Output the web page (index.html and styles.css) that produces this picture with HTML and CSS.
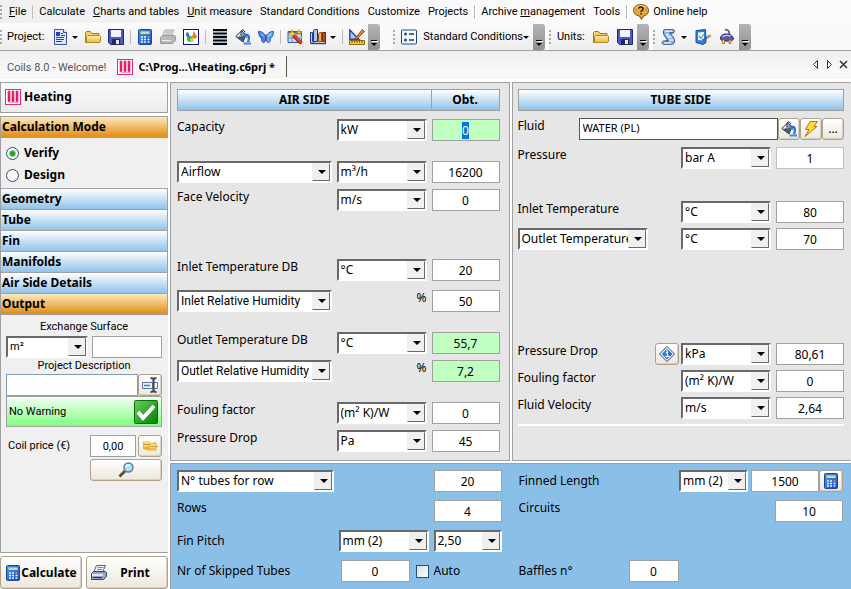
FILE: index.html
```html
<!DOCTYPE html>
<html lang="en">
<head>
  <meta charset="UTF-8" />
  <meta name="viewport" content="width=device-width, initial-scale=1.0"/>
  <title>Coils 8.0 - Heating.c6prj</title>
  <link rel="stylesheet" href="styles.css">
</head>
<body>
  <!-- icon set -->
  <svg class="sprite" aria-hidden="true">
    <defs>
      <linearGradient id="g-blue" x1="0" y1="0" x2="1" y2="1"><stop offset="0" stop-color="#5aa0f0"/><stop offset="1" stop-color="#0c48b8"/></linearGradient>
      <linearGradient id="g-gold" x1="0" y1="0" x2="0" y2="1"><stop offset="0" stop-color="#fff0a8"/><stop offset="1" stop-color="#e8b840"/></linearGradient>
      <linearGradient id="g-pink" x1="0" y1="0" x2="0" y2="1"><stop offset="0" stop-color="#ff2090"/><stop offset="1" stop-color="#d01848"/></linearGradient>
      <linearGradient id="g-green" x1="0" y1="0" x2="1" y2="1"><stop offset="0" stop-color="#6cd060"/><stop offset="1" stop-color="#008000"/></linearGradient>
      <linearGradient id="g-steel" x1="0" y1="0" x2="1" y2="1"><stop offset="0" stop-color="#e0e8f0"/><stop offset="1" stop-color="#384c6c"/></linearGradient>
    </defs>
    <symbol id="i-doc" viewBox="0 0 16 16">
      <path d="M2.500.5h9l3 3v12h-12z" fill="#dce8ff" stroke="#4050b0"/>
      <path d="M11.500.5v3h3" fill="#fff" stroke="#4050b0"/>
      <path d="M4 3h4v4H4z" fill="#2840c0"/>
      <path d="M9 4.500h2M9 6.500h4M4 8.500h8M4 10.500h8M4 12.500h6" stroke="#2840c0"/>
    </symbol>
    <symbol id="i-folder" viewBox="0 0 16 16">
      <path d="M.5 13.500v-10l1-1h4l1.500 2h7v9z" fill="#f4d070" stroke="#a87818"/>
      <path d="M1.500 13.500v-6l1-1h12l1 1v5l-1 1z" fill="url(#g-gold)" stroke="#b08820"/>
    </symbol>
    <symbol id="i-save" viewBox="0 0 16 16">
      <path d="M.5.5h15v15h-13l-2-2z" fill="#5058c0" stroke="#202870"/>
      <path d="M3 1h10v7H3z" fill="#f0f4ff"/>
      <path d="M4 10h8v6H4z" fill="#222a60"/>
      <path d="M8 11h3v4H8z" fill="#e8ecf8"/>
    </symbol>
    <symbol id="i-calc" viewBox="0 0 16 16">
      <rect x="1.500" y=".5" width="13" height="15" rx="1" fill="url(#g-blue)" stroke="#1848a0"/>
      <path d="M3 2h10v3.500H3z" fill="#b8e0c8" stroke="#2860a0" stroke-width=".6"/>
      <path d="M4 8h2M7 8h2M4 10.500h2M7 10.500h2M4 13h2M7 13h2M10.500 10.500h2M10.500 13h2" stroke="#e8f4ff" stroke-width="1.400"/>
      <path d="M10.500 8h2" stroke="#ff8030" stroke-width="1.600"/>
    </symbol>
    <symbol id="i-printer-off" viewBox="0 0 16 16">
      <path d="M5 1h9l-3 7H2z" fill="#e4e4e4" stroke="#aaa"/>
      <path d="M6 3h6M5 5h6" stroke="#aaa"/>
      <path d="M.5 8.500l2-2h12l1 1v4l-3 3H.5z" fill="#b8b8b8" stroke="#999"/>
      <path d="M2 11.500h9" stroke="#eee"/>
    </symbol>
    <symbol id="i-printer" viewBox="0 0 16 16">
      <path d="M5.500.5h9l-3 7h-9z" fill="#f4f6ff" stroke="#586078"/>
      <path d="M6.500 2.500h6M6 4.500h5" stroke="#8088a0"/>
      <path d="M.5 8.500l2-2h12l1 1v4l-3 3H.5z" fill="#98a4c8" stroke="#384060"/>
      <path d="M1 9h11v2H1z" fill="#e0e6f8"/>
      <path d="M2 12.500h9" stroke="#283050"/>
    </symbol>
    <symbol id="i-chart" viewBox="0 0 16 16">
      <rect x=".5" y=".5" width="15" height="15" fill="#fff" stroke="#101080"/>
      <path d="M3 4c0 5 2 6 5 6L5 3z" fill="#2878d0"/>
      <path d="M11 2l3 6-2 2-3-2z" fill="#f07818"/>
      <circle cx="7" cy="10" r="3" fill="#40b060"/>
      <circle cx="9" cy="11" r="2" fill="#c8d840"/>
    </symbol>
    <symbol id="i-lines" viewBox="0 0 16 16">
      <path d="M1 1h14M1 4.500h14M1 8h14M1 11.500h14M1 15h14" stroke="#000810" stroke-width="2"/>
      <path d="M1 2.500h14M1 6.500h14M1 9.500h14M1 13.500h14" stroke="#8898a8" stroke-width=".6"/>
    </symbol>
    <symbol id="i-bucket" viewBox="0 0 16 16">
      <path d="M.8 7.500L6.500 2l4.500 3.500-3 7.500z" fill="url(#g-steel)" stroke="#283858"/>
      <path d="M1.500 8l6.500 4.500L10 7z" fill="#485878"/>
      <path d="M2.500 7.500L7 3.500" stroke="#fff" stroke-width="1.400"/>
      <path d="M6 6V2l2-1.500L10 3" fill="none" stroke="#182848"/>
      <path d="M9.500 5.500C13 3.500 15 6 15 8.500L14.500 13H12V9l-2-1z" fill="#2070e8"/>
      <path d="M12 7l1 5" stroke="#90c8ff"/>
      <path d="M8.500 14.500H16" stroke="#3888f0" stroke-width="2"/>
    </symbol>
    <symbol id="i-butterfly" viewBox="0 0 16 16">
      <path d="M8 7C6 4 3 2 .5 2.500 1 7 2 9 4 9c-1 2 0 5 2 4.500 1-.5 2-2.500 2-4.500z" fill="#3888f0" stroke="#4040a0"/>
      <path d="M8 7c2-3 5-5 7.500-4.500C15 7 14 9 12 9c1 2 0 5-2 4.500-1-.5-2-2.500-2-4.500z" fill="#58b0ff" stroke="#4040a0"/>
      <path d="M3 4.500l3 3M13 4.500l-3 3" stroke="#b0e0ff"/>
      <path d="M8 6v6" stroke="#604890" stroke-width="1.500"/>
    </symbol>
    <symbol id="i-wand" viewBox="0 0 16 16">
      <path d="M1 2.500h13.500v11H1z" fill="#c0d8f8" stroke="#3060b0"/>
      <path d="M1 3h13v2H1z" fill="#3870c8"/>
      <path d="M1 9h13M5 5v8M10 5v8" stroke="#7098d8"/>
      <path d="M6 6l8.500 8.500" stroke="#a02010" stroke-width="3.600"/>
      <path d="M6.500 6l8 8" stroke="#f05838" stroke-width="1.300"/>
      <path d="M5 .5l1 3L9.500 5 6 6 5 9 4 6 .5 5 4 3.500zM12 .5l.7 2 2 .7-2 .7-.7 2-.7-2-2-.7 2-.7z" fill="#ffd030" stroke="#d08010" stroke-width=".6"/>
      <circle cx="14" cy="8.500" r="1" fill="#f0a020"/>
    </symbol>
    <symbol id="i-books" viewBox="0 0 16 16">
      <path d="M.5 3.500h2v9l2 2h-4z" fill="#b8d0f0" stroke="#204080"/>
      <path d="M3.500 1.500l1-1h3v12h-4z" fill="#a8c8f8" stroke="#203878"/>
      <path d="M8.500 4.500l1-1h2v9h-3z" fill="#f8b040" stroke="#905010"/>
      <path d="M12.500 3.500h3v9h-3z" fill="#c04828" stroke="#702010"/>
      <path d="M1 14.500h14.500v-2" fill="none" stroke="#304878" stroke-width="1.500"/>
    </symbol>
    <symbol id="i-ruler" viewBox="0 0 16 16">
      <path d="M.8 1v9.300h9z" fill="#a8c8f8" stroke="#2050c0" stroke-width="1.500"/>
      <path d="M6 9.500L13.500.5l2 2L8 10l-2.500.8z" fill="#f08020" stroke="#802808" stroke-width=".8"/>
      <path d="M.5 11.500h15v4H.5z" fill="#f8d048" stroke="#906810"/>
      <path d="M3 12v2M5.500 12v1.500M8 12v2M10.500 12v1.500M13 12v2" stroke="#604008"/>
    </symbol>
    <symbol id="i-list" viewBox="0 0 16 16">
      <rect x=".5" y="1" width="15" height="14" rx="1" fill="#f4faff" stroke="#284878"/>
      <circle cx="4.500" cy="5" r="1.600" fill="#1058b0"/>
      <circle cx="4.500" cy="11" r="1.600" fill="#1058b0"/>
      <path d="M8 5h5M8 11h5" stroke="#203858" stroke-width="1.500"/>
    </symbol>
    <symbol id="i-scroll" viewBox="0 0 16 16">
      <path d="M3.500.7H12c2 0 2 3 0 3.300H9.500c0 2 4 4 4 7.500 0 2-1 3.800-3 3.800H3c-2.500 0-2.500-3 0-3.300h3.500C6.500 9 3 8 2.500 4 2.300 2 2.300.7 3.500.7z" fill="#8cb4e4" stroke="#285080"/>
      <path d="M4 2.200h7.500M5 5.500l3 .5M6.500 8h4M8.500 11h4M3 13.800h7" stroke="#e8f4ff" stroke-width="1.300"/>
      <path d="M8 4h4M4 12h4" stroke="#305888"/>
    </symbol>
    <symbol id="i-check" viewBox="0 0 16 16">
      <path d="M1 1.500l9.500-1 .5 13-3 2-7-2z" fill="#3080e0" stroke="#1850a0"/>
      <path d="M3 3.500l6-.5v8.500l-6-.5z" fill="#f0f8ff"/>
      <path d="M4 7l2 2.500L9 5" fill="none" stroke="#50a0e0" stroke-width="1.300"/>
      <path d="M7.500 11.500l7.500-5" stroke="#385890" stroke-width="2"/>
      <path d="M12 8.500l4-2" stroke="#c09060" stroke-width="2"/>
    </symbol>
    <symbol id="i-plug" viewBox="0 0 16 16">
      <path d="M6 1c3-1 5 2 4 5" fill="none" stroke="#505860" stroke-width="1.600"/>
      <path d="M1.500 10c0-4 3-5 6-5s6 1 7 5l-2 2H3.500z" fill="#5858b0" stroke="#202060"/>
      <path d="M3.500 8c2-2 6-2 8-1" stroke="#c8c8f0" fill="none" stroke-width="1.400"/>
      <path d="M4.500 11v4M11 11v4" stroke="#c07810" stroke-width="2.600"/>
      <path d="M4.500 11v3M11 11v3" stroke="#ffd060"/>
    </symbol>
    <symbol id="i-help" viewBox="0 0 16 16">
      <path d="M8 .5c5 0 7.500 3 7.500 6 0 3-2 5-5 5.500L8.500 15.500 6.500 12C3 11.500.5 9.500.5 6.500c0-3 2.500-6 7.500-6z" fill="#e0a838" stroke="#785010"/>
      <path d="M3 4c2-3 8-3 10-.5" stroke="#ffe8a0" fill="none"/>
      <path d="M5.500 4.500C6 2.500 10 2.500 10 5c0 1.500-2 1.500-2 3M8 9v1.500" fill="none" stroke="#302008" stroke-width="1.500"/>
    </symbol>
    <symbol id="i-coil" viewBox="0 0 16 16">
      <rect x=".5" y=".5" width="15" height="15" fill="#fff" stroke="#e82880"/>
      <path d="M3 2h2v10.500H3zM7 2h2v10.500H7zM11 2h2v10.500h-2z" fill="url(#g-pink)" stroke="#e82068" stroke-width=".6"/>
      <path d="M4 13.500h9.500" stroke="#f8a0b8"/>
    </symbol>
    <symbol id="i-rename" viewBox="0 0 16 16">
      <path d="M.5 5.500h10v6H.5z" fill="#e8f2ff" stroke="#5878a8"/>
      <path d="M2 8.500h6" stroke="#3080e0" stroke-width="1.500"/>
      <path d="M12 5.500h3.500v6H12" fill="none" stroke="#5878a8"/>
      <path d="M8.500 1c2 0 3 1 3 2v10c0 1-1 2-3 2M14.500 1c-2 0-3 1-3 2v10c0 1 1 2 3 2" fill="none" stroke="#404858" stroke-width="2"/>
    </symbol>
    <symbol id="i-ok" viewBox="0 0 24 24">
      <rect x=".5" y=".5" width="23" height="23" rx="1" fill="url(#g-green)" stroke="#087008"/>
      <path d="M4 12l5 6L20 6" fill="none" stroke="#fff" stroke-width="4"/>
    </symbol>
    <symbol id="i-coins" viewBox="0 0 16 16">
      <path d="M1 3.500h6l2 2 5-2 1.500 5-1.500 4.500H7L1 11z" fill="#ecc050"/>
      <path d="M2 5h5M2 8h4M9 7h5M8 10h6M8 12h5" stroke="#fff0b0"/>
      <path d="M1 6.500h6M1 10h6M9 8.500h6M7.500 11h6" stroke="#d89828"/>
    </symbol>
    <symbol id="i-search" viewBox="0 0 16 16">
      <path d="M1.500 14.500L7 9" stroke="#6a4a40" stroke-width="3"/>
      <circle cx="10.500" cy="5.500" r="4.500" fill="#a8e0ff" stroke="#607898" stroke-width="1.400"/>
      <path d="M8 5c.5-2 2-2.500 3.500-2" stroke="#fff" fill="none" stroke-width="1.400"/>
    </symbol>
    <symbol id="i-bolt" viewBox="0 0 16 16">
      <path d="M7 .5h7.500l-3.500 5h3L2 15.500l4-7H2.500z" fill="#ffd848" stroke="#a87810"/>
    </symbol>
    <symbol id="i-info" viewBox="0 0 16 16">
      <path d="M8 .5L15.500 8 8 15.500.5 8z" fill="#fff" stroke="#184088"/>
      <path d="M8 2.500L13.500 8 8 13.500 2.500 8z" fill="url(#g-blue)"/>
      <path d="M7 6.500h1.500v4M6.500 10.500h4" stroke="#fff" stroke-width="1.300" fill="none"/>
      <circle cx="8" cy="4.700" r=".8" fill="#fff"/>
    </symbol>
  </svg>

  <nav class="menubar">
    <span class="grip"></span>
    <button type="button"><u>F</u>ile</button>
    <span class="sep"></span>
    <button type="button">Calculate</button>
    <button type="button"><u>C</u>harts and tables</button>
    <button type="button"><u>U</u>nit measure</button>
    <button type="button">Standard Conditions</button>
    <button type="button">Customize</button>
    <button type="button">Projects</button>
    <span class="sep"></span>
    <button type="button">Archive <u>m</u>anagement</button>
    <button type="button">Tools</button>
    <span class="sep"></span>
    <button type="button" class="with-icon"><svg><use href="#i-help"/></svg>Online help</button>
  </nav>

  <div class="toolbars">
    <div class="toolbar main-tools">
      <span class="grip"></span>
      <span class="caption">Project:</span>
      <button type="button" class="drop" aria-label="New"><svg><use href="#i-doc"/></svg></button>
      <button type="button" aria-label="Open"><svg><use href="#i-folder"/></svg></button>
      <button type="button" aria-label="Save"><svg><use href="#i-save"/></svg></button>
      <span class="sep"></span>
      <button type="button" aria-label="Calculate"><svg><use href="#i-calc"/></svg></button>
      <button type="button" aria-label="Print" disabled><svg><use href="#i-printer-off"/></svg></button>
      <button type="button" aria-label="Charts"><svg><use href="#i-chart"/></svg></button>
      <span class="sep"></span>
      <button type="button" aria-label="Geometry"><svg><use href="#i-lines"/></svg></button>
      <button type="button" aria-label="Fluids"><svg><use href="#i-bucket"/></svg></button>
      <button type="button" aria-label="Air"><svg><use href="#i-butterfly"/></svg></button>
      <span class="sep"></span>
      <button type="button" aria-label="Wizard"><svg><use href="#i-wand"/></svg></button>
      <button type="button" class="drop" aria-label="Archives"><svg><use href="#i-books"/></svg></button>
      <span class="sep"></span>
      <button type="button" aria-label="Drawing"><svg><use href="#i-ruler"/></svg></button>
      <button type="button" class="more" aria-label="More"></button>
    </div>
    <div class="toolbar">
      <span class="grip"></span>
      <button type="button" class="drop text"><svg><use href="#i-list"/></svg>Standard Conditions</button>
      <button type="button" class="more" aria-label="More"></button>
    </div>
    <div class="toolbar">
      <span class="grip"></span>
      <span class="caption">Units:</span>
      <button type="button" aria-label="Open units"><svg><use href="#i-folder"/></svg></button>
      <button type="button" aria-label="Save units"><svg><use href="#i-save"/></svg></button>
      <button type="button" class="more" aria-label="More"></button>
    </div>
    <div class="toolbar">
      <span class="grip"></span>
      <button type="button" class="drop" aria-label="Scripts"><svg><use href="#i-scroll"/></svg></button>
      <button type="button" aria-label="Check"><svg><use href="#i-check"/></svg></button>
      <button type="button" aria-label="Connect"><svg><use href="#i-plug"/></svg></button>
      <button type="button" class="more" aria-label="More"></button>
    </div>
  </div>

  <div class="tabs">
    <button type="button" class="tab">Coils 8.0 - Welcome!</button>
    <button type="button" class="tab active"><svg><use href="#i-coil"/></svg>C:\Prog...\Heating.c6prj *</button>
    <div class="tab-nav">
      <button type="button" aria-label="Previous"><svg viewBox="0 0 9 9"><path d="M6.500.5v8l-4-4z"/></svg></button>
      <button type="button" aria-label="Next"><svg viewBox="0 0 9 9"><path d="M2.500.5v8l4-4z"/></svg></button>
      <button type="button" aria-label="Close"><svg viewBox="0 0 9 9"><path d="M1 1l7 7M8 1L1 8" stroke-width="1.500"/></svg></button>
    </div>
  </div>

  <main class="workspace">
    <aside class="sidebar">
      <div class="coil-type"><svg><use href="#i-coil"/></svg>Heating</div>
      <div class="accordion">
        <button type="button" class="section open">Calculation Mode</button>
        <div class="modes">
          <label><input type="radio" name="mode" checked />Verify</label>
          <label><input type="radio" name="mode" />Design</label>
        </div>
        <button type="button" class="section">Geometry</button>
        <button type="button" class="section">Tube</button>
        <button type="button" class="section">Fin</button>
        <button type="button" class="section">Manifolds</button>
        <button type="button" class="section">Air Side Details</button>
        <button type="button" class="section open">Output</button>
        <div class="output">
          <label for="surface">Exchange Surface</label>
          <div class="surface">
            <span class="combo"><select aria-label="Surface unit"><option>m²</option></select></span>
            <input type="text" id="surface" class="field" />
          </div>
          <label for="description">Project Description</label>
          <div class="description">
            <input type="text" id="description" class="field" />
            <button type="button" class="btn" aria-label="Edit description"><svg><use href="#i-rename"/></svg></button>
          </div>
          <div class="warning">No Warning<svg><use href="#i-ok"/></svg></div>
          <div class="price">
            <label for="price">Coil price (€)</label>
            <input type="text" id="price" class="field" value="0,00" />
            <button type="button" class="btn" aria-label="Price list"><svg><use href="#i-coins"/></svg></button>
            <button type="button" class="btn find" aria-label="Find"><svg><use href="#i-search"/></svg></button>
          </div>
        </div>
      </div>
      <div class="actions">
        <button type="button" class="btn"><svg><use href="#i-calc"/></svg><span>Calculate</span></button>
        <button type="button" class="btn"><svg><use href="#i-printer"/></svg><span>Print</span></button>
      </div>
    </aside>

    <section class="panel air">
      <div class="heads"><h2>AIR SIDE</h2><h2>Obt.</h2></div>
      <div class="group">
        <div class="row">
          <label for="capacity">Capacity</label>
          <span class="combo"><select aria-label="Capacity unit"><option>kW</option></select></span>
          <input type="text" id="capacity" class="field result" value="0" autofocus />
        </div>
      </div>
      <div class="group">
        <div class="row">
          <span class="combo"><select aria-label="Flow type"><option>Airflow</option></select></span>
          <span class="combo"><select aria-label="Airflow unit"><option>m³/h</option></select></span>
          <input type="text" aria-label="Airflow" class="field" value="16200" />
        </div>
        <div class="row">
          <label for="face">Face Velocity</label>
          <span class="combo"><select aria-label="Face velocity unit"><option>m/s</option></select></span>
          <input type="text" id="face" class="field" value="0" />
        </div>
      </div>
      <div class="group inlet">
        <div class="row">
          <label for="inlet-db">Inlet Temperature DB</label>
          <span class="combo"><select aria-label="Inlet temperature unit"><option>°C</option></select></span>
          <input type="text" id="inlet-db" class="field" value="20" />
        </div>
        <div class="row">
          <span class="combo humidity"><select aria-label="Inlet humidity type"><option>Inlet Relative Humidity</option></select></span>
          <span class="unit">%</span>
          <input type="text" aria-label="Inlet humidity" class="field" value="50" />
        </div>
      </div>
      <div class="group">
        <div class="row">
          <label for="outlet-db">Outlet Temperature DB</label>
          <span class="combo"><select aria-label="Outlet temperature unit"><option>°C</option></select></span>
          <input type="text" id="outlet-db" class="field result" value="55,7" />
        </div>
        <div class="row">
          <span class="combo humidity"><select aria-label="Outlet humidity type"><option>Outlet Relative Humidity</option></select></span>
          <span class="unit">%</span>
          <input type="text" aria-label="Outlet humidity" class="field result" value="7,2" />
        </div>
      </div>
      <div class="group">
        <div class="row">
          <label for="air-fouling">Fouling factor</label>
          <span class="combo"><select aria-label="Fouling unit"><option>(m² K)/W</option></select></span>
          <input type="text" id="air-fouling" class="field" value="0" />
        </div>
        <div class="row">
          <label for="air-drop">Pressure Drop</label>
          <span class="combo"><select aria-label="Pressure drop unit"><option>Pa</option></select></span>
          <input type="text" id="air-drop" class="field" value="45" />
        </div>
      </div>
    </section>

    <section class="panel tube">
      <div class="heads"><h2>TUBE SIDE</h2></div>
      <div class="group">
        <div class="fluid">
          <label for="fluid">Fluid</label>
          <input type="text" id="fluid" value="WATER (PL)" />
          <button type="button" class="btn" aria-label="Fluid type"><svg><use href="#i-bucket"/></svg></button>
          <button type="button" class="btn" aria-label="Quick pick"><svg><use href="#i-bolt"/></svg></button>
          <button type="button" class="btn">...</button>
        </div>
        <div class="row">
          <label for="pressure">Pressure</label>
          <span class="combo"><select aria-label="Pressure unit"><option>bar A</option></select></span>
          <input type="text" id="pressure" class="field light" value="1" />
        </div>
      </div>
      <div class="group temps">
        <div class="row">
          <label for="tube-in">Inlet Temperature</label>
          <span class="combo"><select aria-label="Inlet unit"><option>°C</option></select></span>
          <input type="text" id="tube-in" class="field" value="80" />
        </div>
        <div class="row">
          <span class="combo outlet"><select aria-label="Outlet type"><option>Outlet Temperature</option></select></span>
          <span class="combo"><select aria-label="Outlet unit"><option>°C</option></select></span>
          <input type="text" aria-label="Outlet temperature" class="field" value="70" />
        </div>
      </div>
      <div class="group drops">
        <div class="row">
          <div class="with-info">
            <label for="tube-drop">Pressure Drop</label>
            <button type="button" class="btn" aria-label="Information"><svg><use href="#i-info"/></svg></button>
          </div>
          <span class="combo"><select aria-label="Pressure drop unit"><option>kPa</option></select></span>
          <input type="text" id="tube-drop" class="field" value="80,61" />
        </div>
        <div class="row">
          <label for="tube-fouling">Fouling factor</label>
          <span class="combo"><select aria-label="Fouling unit"><option>(m² K)/W</option></select></span>
          <input type="text" id="tube-fouling" class="field" value="0" />
        </div>
        <div class="row">
          <label for="velocity">Fluid Velocity</label>
          <span class="combo"><select aria-label="Velocity unit"><option>m/s</option></select></span>
          <input type="text" id="velocity" class="field" value="2,64" />
        </div>
      </div>
      <hr>
    </section>

    <section class="geometry">
      <div class="geo-col">
        <div class="row">
          <span class="combo"><select aria-label="Tube count type"><option>N° tubes for row</option></select></span>
          <span></span>
          <input type="text" aria-label="Tubes" class="field" value="20" />
        </div>
        <div class="row">
          <label for="rows">Rows</label>
          <span></span>
          <input type="text" id="rows" class="field" value="4" />
        </div>
        <div class="row low">
          <label for="pitch">Fin Pitch</label>
          <span class="combo"><select aria-label="Pitch unit"><option>mm (2)</option></select></span>
          <span class="combo"><select id="pitch"><option>2,50</option></select></span>
        </div>
        <div class="row low">
          <label for="skipped">Nr of Skipped Tubes</label>
          <div class="skipped">
            <input type="text" id="skipped" class="field" value="0" />
            <input type="checkbox" id="auto" />
          </div>
          <label for="auto">Auto</label>
        </div>
      </div>
      <div class="geo-col">
        <div class="line low">
          <label for="length">Finned Length</label>
          <span class="combo"><select aria-label="Length unit"><option>mm (2)</option></select></span>
          <div class="length">
            <input type="text" id="length" class="field" value="1500" />
            <button type="button" class="btn" aria-label="Compute length"><svg><use href="#i-calc"/></svg></button>
          </div>
        </div>
        <div class="line">
          <label for="circuits">Circuits</label>
          <input type="text" id="circuits" class="field" value="10" />
        </div>
        <div class="line"></div>
        <div class="line low">
          <label for="baffles" class="baffles">Baffles n°</label>
          <input type="text" id="baffles" class="field short" value="0" />
        </div>
      </div>
    </section>
  </main>

  <script>
    document.getElementById('capacity').select();
  </script>
</body>
</html>
```
FILE: styles.css
```css
* {
  box-sizing: border-box;
}
body {
  margin: 0;
  min-height: 100vh;
  display: flex;
  flex-direction: column;
  background: #fff;
  color: #000;
  font-family: "Noto Sans", sans-serif;
  font-size: 12px;
  line-height: 16px;
}
button, input, select {
  font: inherit;
  color: inherit;
  margin: 0;
}
button {
  padding: 0;
  border: none;
  background: none;
}
svg {
  width: 16px;
  height: 16px;
  flex: none;
  display: block;
}
.sprite {
  position: absolute;
  width: 0;
  height: 0;
}

/* menu and toolbars */
.menubar, .toolbars, .tab, .output {
  font-family: Roboto, sans-serif;
  font-size: 11px;
}
.menubar {
  display: flex;
  align-items: center;
  height: 23px;
  gap: 8px;
  background: linear-gradient(90deg, #f0f0f0, #fbfbfb 60%);
  white-space: nowrap;
}
.menubar .sep {
  margin: 0 -2px;
}
.with-icon {
  display: flex;
  align-items: center;
  gap: 4px;
}
.grip {
  width: 2px;
  height: 14px;
  background: repeating-linear-gradient(#aaa 0 2px, transparent 2px 4px);
}
.menubar .grip {
  margin-right: -1px;
}
.sep {
  width: 1px;
  height: 14px;
  background: #bbb;
}
.toolbars {
  display: flex;
  height: 28px;
  gap: 4px;
  padding-top: 2px;
  border-bottom: 1px solid #a0a0a0;
  background: #fafafa;
  white-space: nowrap;
}
.toolbar {
  display: flex;
  align-items: center;
  gap: 7px;
  padding-bottom: 1px;
  background: linear-gradient(#fbfbfb, #ececec);
}
.toolbar + .toolbar {
  gap: 8px;
}
.main-tools {
  margin-right: 9px;
}
.main-tools .caption {
  margin-right: 1px;
}
.toolbar .grip {
  margin-right: -2px;
}
.toolbar .sep {
  margin: 0 -1px;
}
.drop {
  display: flex;
  align-items: center;
  gap: 4px;
}
.drop::after {
  content: "";
  border: 3px solid transparent;
  border-top-color: #000;
  border-bottom: none;
}
.text {
  gap: 0;
}
.text svg {
  margin-right: 6px;
}
.more {
  align-self: stretch;
  width: 12px;
  margin: -1px 0 -1px -4px;
  display: flex;
  flex-direction: column;
  align-items: center;
  justify-content: flex-end;
  gap: 2px;
  padding-bottom: 4px;
  border-radius: 0 3px 3px 0;
  background: linear-gradient(#b4b4b4, #909090);
}
.more::before {
  content: "";
  width: 6px;
  height: 1px;
  background: #000;
  box-shadow: 1px 1px #fff;
}
.more::after {
  content: "";
  border: 3px solid transparent;
  border-top-color: #000;
  border-bottom: none;
}

.tabs {
  display: flex;
  align-items: flex-end;
  height: 26px;
  background: linear-gradient(#efefef, #fbfbfb);
}
.tab {
  height: 21px;
  padding: 3px 6px 0 7px;
  color: #555;
}
.tab.active {
  display: flex;
  align-items: center;
  gap: 5px;
  padding: 0 11px 0 5px;
  border-right: 1px solid #555;
  background: #f6f6f6;
  color: #000;
  font-family: "Noto Sans", sans-serif;
  font-weight: bold;
}
.tab-nav {
  display: flex;
  align-self: center;
  gap: 5px;
  margin-left: auto;
  padding-right: 3px;
}
.tab-nav svg {
  width: 9px;
  height: 9px;
  fill: none;
  stroke: #333;
}

/* workspace */
.workspace {
  flex: 1;
  display: grid;
  grid-template-columns: 168px 1fr 1fr;
  grid-template-rows: auto 1fr;
  gap: 2px;
  padding-top: 4px;
  border-top: 1px solid #f0f0f0;
}
.sidebar {
  grid-row: span 2;
  display: flex;
  flex-direction: column;
  gap: 3px;
  font-weight: bold;
}
.coil-type {
  display: flex;
  gap: 3px;
  height: 31px;
  padding: 6px 4px;
  border: 1px solid #a0a0a0;
  background: linear-gradient(#fafafa, #ececec);
}
.accordion {
  flex: 1;
  display: flex;
  flex-direction: column;
  border: 1px solid #a0a0a0;
  border-right-width: 0;
  background: #f0f0f0;
}
.section {
  height: 21px;
  padding: 0 1px;
  border-right: 1px solid #a0a0a0;
  border-bottom: 1px solid #a0a0a0;
  background: linear-gradient(#fff, #8fc3ea);
  text-align: left;
  font-weight: bold;
}
.section.open {
  background: linear-gradient(#ffe9c0, #df8c14);
}
.modes {
  display: flex;
  flex-direction: column;
  gap: 6px;
  padding: 7px 5px 5px;
  border-bottom: 1px solid #a0a0a0;
}
.modes label {
  display: flex;
  align-items: center;
  gap: 5px;
}
input[type="radio"] {
  appearance: none;
  width: 13px;
  height: 13px;
  border: 1px solid #205080;
  border-radius: 50%;
  background: #f8f8f8;
}
input[type="radio"]:checked {
  background: radial-gradient(circle, #28a028 2px, #f8f8f8 4px);
}
.output {
  display: flex;
  flex-direction: column;
  padding: 4px 6px 4px 5px;
  font-weight: normal;
}
.output > label {
  text-align: center;
}
.surface {
  display: flex;
  gap: 4px;
  margin-top: 1px;
}
.surface .combo {
  width: 82px;
}
.surface .field {
  flex: 1;
  min-width: 0;
}
.description {
  display: flex;
}
.description .field {
  flex: 1;
  min-width: 0;
  border-color: #7f9db9;
}
.description .btn {
  width: 24px;
}
.warning {
  display: flex;
  align-items: center;
  justify-content: space-between;
  height: 31px;
  padding: 0 3px 0 2px;
  border: 1px solid #a0a0a0;
  background: linear-gradient(#f4fff4, #80ff80);
}
.warning svg {
  width: 24px;
  height: 24px;
}
.price {
  display: grid;
  grid-template-columns: 1fr 46px 24px;
  gap: 2px;
  align-items: center;
  margin-top: 8px;
  padding-left: 2px;
}
.price .field {
  width: 100%;
}
.price .find {
  grid-column: 2 / 4;
}
.actions {
  display: flex;
  gap: 4px;
  height: 33px;
}
.actions .btn {
  flex: 1;
  height: auto;
  padding: 0 4px;
  font-weight: bold;
}
.actions span {
  flex: 1;
}

/* controls */
.btn {
  display: flex;
  align-items: center;
  justify-content: center;
  height: 22px;
  border: 1px solid #b0a090;
  border-radius: 3px;
  background: linear-gradient(#fff, #ece8dc);
  box-shadow: inset -1px -1px #d8d0c0;
}
.field {
  width: 68px;
  height: 22px;
  padding: 0 2px;
  border: 1px solid #a0a0a0;
  border-radius: 0;
  background: #fff;
  text-align: center;
  outline: none;
}
.field.result {
  background: #c0ffc0;
}
.field.light {
  border-color: #c0c0c0;
}
.field::selection {
  background: #0078d7;
  color: #fff;
}
.combo {
  position: relative;
  display: block;
  height: 22px;
}
.combo select {
  appearance: none;
  display: block;
  width: 100%;
  height: 100%;
  padding: 0 16px 0 2px;
  border: 2px solid;
  border-color: #696969 #fff #fff #696969;
  border-radius: 0;
  background: #fff;
  outline: none;
  overflow: hidden;
}
.combo.humidity select {
  font-family: Roboto, sans-serif;
}
/* drop-down button drawn over the select */
.combo::before {
  content: "";
  position: absolute;
  top: 2px;
  right: 2px;
  bottom: 2px;
  width: 16px;
  border: 1px solid;
  border-color: #f0f0f0 #696969 #696969 #f0f0f0;
  background: #f0f0f0;
  pointer-events: none;
}
.combo::after {
  content: "";
  position: absolute;
  top: 9px;
  right: 6px;
  border: 4px solid transparent;
  border-top-color: #000;
  border-bottom: none;
  pointer-events: none;
}

/* air and tube panels */
.panel {
  min-width: 0;
  height: 379px;
  border: 1px solid #a0a0a0;
  background: #e6e6e6;
}
.panel.air {
  padding: 6px 9px 6px 6px;
}
.panel.tube {
  padding: 6px 6px 6px 5px;
  border-right-color: #e6e6e6;
}
.heads {
  display: flex;
}
h2 {
  flex: 1;
  height: 22px;
  margin: 0;
  border: 1px solid #a0a0a0;
  background: linear-gradient(#fff, #8fc3ea);
  font-size: 12px;
  line-height: 20px;
  text-align: center;
}
h2 + h2 {
  flex: none;
  width: 68px;
  border-left: none;
}
.group {
  display: flex;
  flex-direction: column;
  gap: 6px;
  margin-top: 20px;
}
.heads + .group {
  margin-top: 8px;
}
.group.inlet {
  gap: 9px;
  margin-top: 48px;
}
.tube .group {
  gap: 5px;
}
.tube .heads + .group {
  margin-top: 7px;
}
.tube .group.temps {
  margin-top: 32px;
}
.tube .group.drops {
  margin-top: 93px;
}
.row {
  display: grid;
  grid-template-columns: 1fr 90px 68px;
  column-gap: 5px;
}
.unit {
  text-align: right;
}
.low {
  align-items: center;
}
.fluid {
  display: grid;
  grid-template-columns: 61px 1fr 22px 22px 22px;
  margin-bottom: 2px;
}
.fluid input {
  min-width: 0;
  height: 22px;
  padding: 0 3px 4px;
  border: 1px solid #555;
  font-size: 11px;
  outline: none;
}
.outlet {
  width: 130px;
}
.with-info {
  display: flex;
  justify-content: space-between;
  margin-right: -3px;
}
.with-info .btn {
  width: 24px;
}
hr {
  height: 2px;
  margin: 5px 0 0;
  border: none;
  background: #fff;
}

/* coil geometry */
.geometry {
  grid-column: span 2;
  display: flex;
  gap: 17px;
  padding: 6px 8px 6px 6px;
  border-top: 1px solid #a0a0a0;
  border-left: 1px solid #a0a0a0;
  background: #8ac0e8;
}
.geo-col {
  flex: 1;
  display: flex;
  flex-direction: column;
  gap: 8px;
}
.skipped {
  display: flex;
  align-items: center;
  gap: 6px;
  padding-left: 2px;
}
.skipped .field {
  flex: 1;
  min-width: 0;
}
input[type="checkbox"] {
  appearance: none;
  width: 13px;
  height: 13px;
  border: 1px solid #205080;
  background: linear-gradient(135deg, #ddd, #fff);
}
.line {
  display: flex;
  gap: 3px;
  height: 22px;
}
.line label {
  flex: 1;
}
.line .combo {
  width: 69px;
}
.length {
  display: flex;
}
.length .btn {
  width: 24px;
}
.line .baffles {
  flex: none;
  width: 107px;
}
.field.short {
  width: 50px;
}
```
